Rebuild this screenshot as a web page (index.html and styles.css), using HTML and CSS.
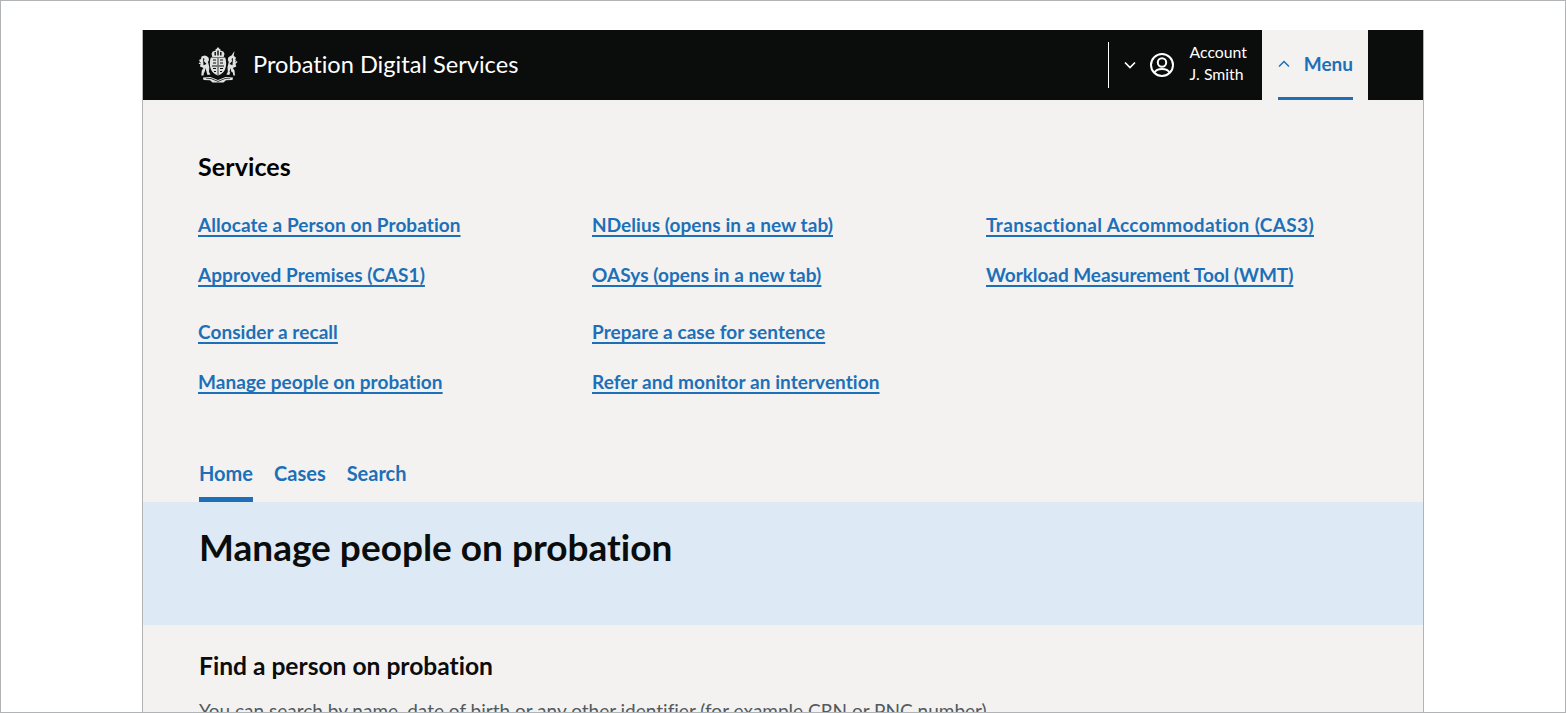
FILE: index.html
```html
<!DOCTYPE html>
<html lang="en">
<head>
<meta charset="utf-8">
<title>Manage people on probation</title>
<link rel="stylesheet" href="styles.css">
</head>
<body>
<div class="window">
  <div class="page">
    <header class="topbar">
      <a class="brand" href="#">
        <svg class="crest" viewBox="0 0 40 36" aria-hidden="true">
          <g fill="#fff">
            <path d="M20 0l1.300 1.800 1.200.4-.2 1.400 3 .8 1.200 2.400-.8 3.200H14.300l-.8-3.200 1.200-2.400 3-.8-.2-1.400 1.200-.4z"/>
            <path d="M12.800 10.500h14.400c1.300 3 1.300 8.500 0 11.500-1 3-4 5.500-7.200 6.500-3.200-1-6.200-3.500-7.200-6.500-1.300-3-1.300-8.500 0-11.500z"/>
            <path d="M6.500 8.500l2 .5 2 1.500.5 2.500-1 2 1.300 5-.3 5 1.500 2.500-3 .5-1.200-3.500-2.300 1-.5 3H3.300l.5-5 1.700-2.500-3.500-1.500.5-2.500L.5 17l1.500-2-1-2 2-1 .5-2.500z"/>
            <path d="M33.500 8.500l3-4.500-.8 4.800 2.300 2-.8 2.200 2.300 2-2 2 .8 2.500-3.500 1.500 1.700 2.500.5 5h-1.700l-.5-3-2.300-1-1.200 3.500-3-.5 1.500-2.500-.3-5 1.300-5-1-2 .5-2.500 2-1.500z"/>
            <path d="M5 30.500l7.500-.5 7.500 3 7.500-3 7.500.5-.5 2.500-6.500.3-2.500 2.200h-11l-2.500-2.200-6.500-.3z"/>
          </g>
          <g fill="#0b0c0c">
            <path d="M19.600 11v17h.8V11zM14 18.600h12v.8H14z"/>
            <path d="M15 12.500h3v1h-3zM22 12.500h3v1h-3zM15 15.500h3v1h-3zM22 15.500h3v1h-3zM15 21h3v1h-3zM22 21h3v1h-3zM16 24h2v1h-2zM22 24h2v1h-2z"/>
            <path d="M16.500 5h1.400v3.500h-1.400zM19.300 3.500h1.400v5h-1.400zM22.100 5h1.400v3.500h-1.400z"/>
            <path d="M5 11l1.500 1-.7 2 2.700 3-3 1.200zM35 11l-1.500 1 .7 2-2.700 3 3 1.200zM7.500 21l1 4-2 .5zM32.500 21l-1 4 2 .5zM2 15l1 .5-.5 1zM38 14l-1 .5.5 1z"/>
            <path d="M8 31.400l4.500-.3 7.500 3 7.500-3 4.500.3v.6l-4.500-.2-7.500 3-7.500-3-4.500.2z"/>
          </g>
        </svg>
        <span class="service-name">Probation Digital Services</span>
      </a>
      <div class="account">
        <svg class="chevron" viewBox="0 0 12 8" aria-hidden="true"><path d="M1 1.500l5 5 5-5" fill="none" stroke="#fff" stroke-width="1.700"/></svg>
        <svg class="user-icon" viewBox="0 0 24 24" aria-hidden="true">
          <g fill="none" stroke="#fff" stroke-width="2">
            <circle cx="12" cy="12" r="11"/>
            <circle cx="12" cy="9.500" r="4.200"/>
            <path d="M4.300 19.800c1.500-2.800 4.200-3.800 7.700-3.800s6.200 1 7.700 3.800"/>
          </g>
        </svg>
        <div class="account-text">
          <span>Account</span>
          <span>J. Smith</span>
        </div>
      </div>
      <button class="menu-tab" type="button">
        <span class="menu-inner">
          <svg class="chevron-up" viewBox="0 0 12 8" aria-hidden="true"><path d="M1 6.500l5-5 5 5" fill="none" stroke="#1d70b8" stroke-width="1.500"/></svg>
          <span>Menu</span>
        </span>
      </button>
    </header>

    <section class="services">
      <h2 class="services-title">Services</h2>
      <ul class="service-grid">
        <li><a href="#">Allocate a Person on Probation</a></li>
        <li><a href="#">NDelius (opens in a new tab)</a></li>
        <li><a class="link-wide" href="#">Transactional Accommodation (CAS3)</a></li>
        <li><a href="#">Approved Premises (CAS1)</a></li>
        <li><a href="#">OASys (opens in a new tab)</a></li>
        <li><a class="link-tight" href="#">Workload Measurement Tool (WMT)</a></li>
      </ul>
      <ul class="service-grid service-grid-next">
        <li><a href="#">Consider a recall</a></li>
        <li><a href="#">Prepare a case for sentence</a></li>
        <li></li>
        <li><a href="#">Manage people on probation</a></li>
        <li><a href="#">Refer and monitor an intervention</a></li>
      </ul>
      <nav class="primary-nav">
        <a class="nav-item nav-item-active" href="#">Home</a>
        <a class="nav-item" href="#">Cases</a>
        <a class="nav-item" href="#">Search</a>
      </nav>
    </section>

    <section class="banner">
      <h1>Manage people on probation</h1>
    </section>

    <main class="content">
      <h2>Find a person on probation</h2>
      <p>You can search by name, date of birth or any other identifier (for example CRN or PNC number).</p>
    </main>
  </div>
</div>
</body>
</html>
```

FILE: styles.css
```css
* {
  box-sizing: border-box;
}

html,
body {
  margin: 0;
  height: 100%;
  overflow: hidden;
}

body {
  background: #fff;
  color: #0b0c0c;
  font-family: Lato, "Noto Sans", sans-serif;
  font-variant-ligatures: none;
}

.window {
  height: 713px;
  padding: 29px 141px 0;
  border: 1px solid #b1b4b6;
  overflow: hidden;
}

.page {
  background: #f3f2f1;
  border-left: 1px solid #b1b4b6;
  border-right: 1px solid #b1b4b6;
  height: 683px;
  overflow: hidden;
}

.topbar {
  display: flex;
  align-items: stretch;
  height: 70px;
  background: #0b0c0c;
  padding-left: 55px;
  padding-right: 55px;
}

.brand {
  display: flex;
  align-items: center;
  gap: 15px;
  color: #fff;
  text-decoration: none;
  margin-right: auto;
}

.crest {
  width: 40px;
  height: 36px;
  opacity: 0.88;
}

.service-name {
  padding-bottom: 2px;
  font-size: 23.6px;
}

.account {
  display: flex;
  align-items: center;
  align-self: center;
  height: 46px;
  margin-top: -1px;
  border-left: 1px solid #fff;
  padding-left: 15px;
  padding-right: 15px;
  color: #fff;
}

.chevron {
  width: 12px;
  height: 8px;
  margin-right: 14px;
}

.user-icon {
  width: 24px;
  height: 24px;
  margin-right: 16px;
}

.account-text {
  display: flex;
  flex-direction: column;
  margin-top: -4px;
  font-size: 15.8px;
  line-height: 22px;
}

.menu-tab {
  width: 106px;
  padding: 0 15px 0 16px;
  background: #f3f2f1;
  border: 0;
  font: inherit;
  font-variant-ligatures: none;
}

.menu-inner {
  display: flex;
  align-items: center;
  justify-content: space-between;
  height: 70px;
  border-bottom: 3px solid #1d70b8;
  color: #1d70b8;
  font-size: 19px;
  font-weight: 700;
}

.chevron-up {
  width: 12px;
  height: 8px;
}

.services {
  height: 402px;
  padding: 51px 55px 0;
}

.services-title {
  margin: 0 0 29px;
  font-size: 25px;
  line-height: 30px;
  font-weight: 700;
  letter-spacing: 0.1px;
  color: #000;
}

.service-grid {
  display: grid;
  grid-template-columns: repeat(3, 394px);
  grid-auto-rows: 50px;
  margin: 0;
  padding: 0;
  list-style: none;
  font-size: 19px;
  line-height: 30px;
  font-weight: 700;
  letter-spacing: 0.06px;
}

.service-grid-next {
  margin-top: 7px;
}

.service-grid a {
  color: #1d70b8;
  text-decoration: underline;
  text-decoration-thickness: 2px;
  text-underline-offset: 3px;
}

.service-grid .link-wide {
  letter-spacing: 0.35px;
}

.service-grid .link-tight {
  letter-spacing: -0.05px;
}

.primary-nav {
  display: flex;
  gap: 21px;
  margin-top: 37px;
  padding-left: 1px;
}

.nav-item {
  height: 48px;
  padding-top: 5px;
  color: #1d70b8;
  border-bottom: 5px solid transparent;
  text-decoration: none;
  font-size: 20px;
  line-height: 28px;
  font-weight: 700;
}

.nav-item-active {
  border-bottom-color: #1d70b8;
}

.banner {
  height: 123px;
  padding: 23px 56px 0;
  background: #ddeaf5;
}

.banner h1 {
  margin: 0;
  font-size: 37px;
  line-height: 44px;
  font-weight: 700;
}

.content {
  padding: 24px 56px 0;
}

.content h2 {
  margin: 0 0 15px;
  font-size: 24.6px;
  line-height: 34px;
  font-weight: 700;
}

.content p {
  margin: 0;
  font-size: 19px;
  line-height: 26px;
  color: #505a5f;
}
```
